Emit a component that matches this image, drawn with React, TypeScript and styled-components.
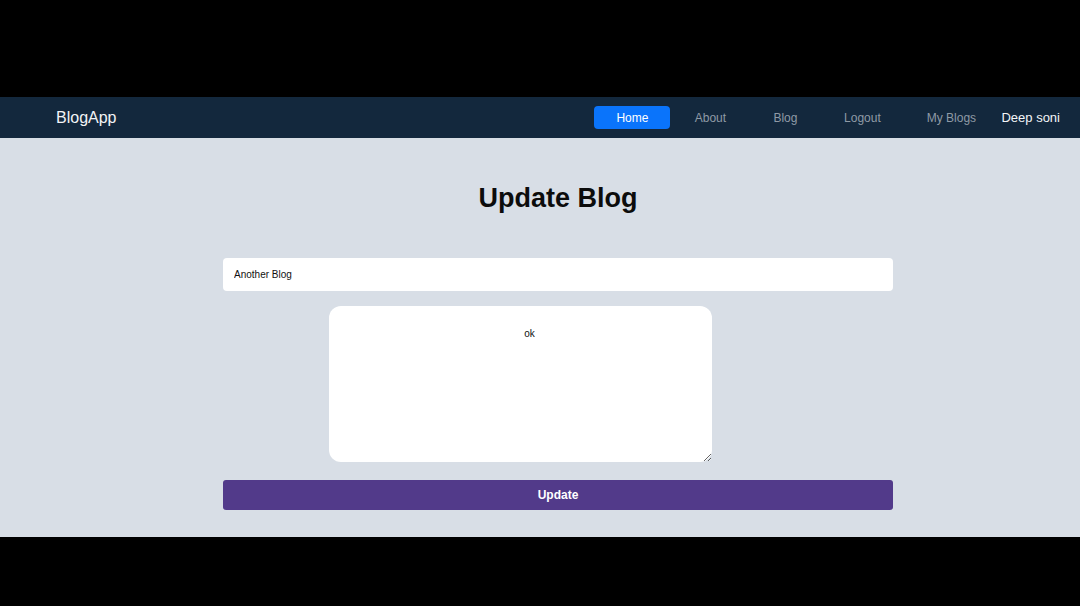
import React from "react";
import styled, { createGlobalStyle } from "styled-components";

const Global = createGlobalStyle`
  html, body { margin: 0; padding: 0; background: #000; }
  body { font-family: "Liberation Sans", Arial, sans-serif; }
`;

const Screen = styled.div`
  width: 1080px;
  height: 606px;
  background: #000;
  display: flex;
  flex-direction: column;
`;

const TopGap = styled.div`
  height: 97px;
  flex: none;
`;

const Nav = styled.nav`
  height: 41px;
  background: #13283d;
  display: flex;
  align-items: center;
  padding: 0 20px 0 56px;
  box-sizing: border-box;
  flex: none;
`;

const Brand = styled.div`
  color: #f2f4f6;
  font-size: 16px;
  flex: 1;
`;

const Links = styled.div`
  display: flex;
  align-items: center;
`;

const NavLink = styled.a<{ $active?: boolean; $w: number }>`
  box-sizing: border-box;
  width: ${(p) => p.$w}px;
  height: 23px;
  display: flex;
  align-items: center;
  justify-content: center;
  border-radius: 4px;
  font-size: 12px;
  color: ${(p) => (p.$active ? "#ffffff" : "#8f9aa6")};
  background: ${(p) => (p.$active ? "#0a74fb" : "transparent")};
`;

const User = styled.span`
  color: #f4f6f8;
  font-size: 13px;
  margin-left: 3px;
  white-space: nowrap;
`;

const Main = styled.main`
  height: 399px;
  background: #d8dee6;
  display: flex;
  flex-direction: column;
  align-items: center;
  padding-left: 36px;
  box-sizing: border-box;
  flex: none;
`;

const Title = styled.h1`
  margin: 44px 0 44px;
  font-size: 27px;
  font-weight: bold;
  color: #0c0c0c;
  line-height: 32px;
`;

const Form = styled.form`
  width: 670px;
  display: flex;
  flex-direction: column;
`;

const TitleInput = styled.input`
  box-sizing: border-box;
  height: 33px;
  border: none;
  border-radius: 4px;
  background: #fff;
  padding: 0 11px;
  font-family: "Liberation Sans", Arial, sans-serif;
  font-size: 10px;
  color: #111;
  outline: none;
`;

const Body = styled.textarea`
  box-sizing: border-box;
  width: 383px;
  height: 156px;
  margin: 15px 0 0 106px;
  border: none;
  border-radius: 12px;
  background: #fff;
  text-align: center;
  padding: 22px 0 0 18px;
  font-family: "Liberation Sans", Arial, sans-serif;
  font-size: 10px;
  color: #111;
  outline: none;
`;

const Submit = styled.button`
  box-sizing: border-box;
  height: 30px;
  margin-top: 18px;
  border: none;
  border-radius: 3px;
  background: #523a8a;
  color: #fff;
  font-family: "Liberation Sans", Arial, sans-serif;
  font-size: 12px;
  font-weight: bold;
`;

export default function App() {
  return (
    <>
      <Global />
      <Screen>
        <TopGap />
        <Nav>
          <Brand>BlogApp</Brand>
          <Links>
            <NavLink $active $w={76}>Home</NavLink>
            <NavLink $w={80}>About</NavLink>
            <NavLink $w={70}>Blog</NavLink>
            <NavLink $w={84}>Logout</NavLink>
            <NavLink $w={94}>My Blogs</NavLink>
          </Links>
          <User>Deep soni</User>
        </Nav>
        <Main>
          <Title>Update Blog</Title>
          <Form onSubmit={(e) => e.preventDefault()}>
            <TitleInput defaultValue="Another Blog" />
            <Body defaultValue="ok" />
            <Submit type="submit">Update</Submit>
          </Form>
        </Main>
      </Screen>
    </>
  );
}
